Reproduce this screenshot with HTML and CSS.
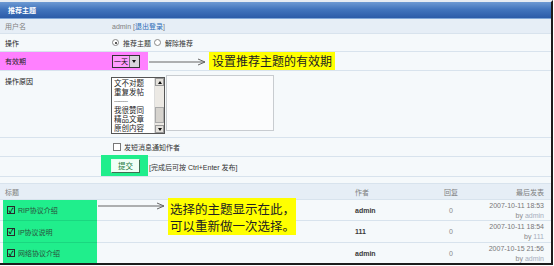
FILE: index.html
```html
<!DOCTYPE html>
<html>
<head>
<meta charset="utf-8">
<link rel="stylesheet" href="styles.css">
</head>
<body>
<div class="panel">
  <div class="head">推荐主题</div>
  <div class="row user"><span class="lbl muted">用户名</span><span class="val muted">admin [<span class="link">退出登录</span>]</span></div>
  <div class="row op"><span class="lbl">操作</span><span class="val"><span class="radio on"></span>推荐主题 <span class="radio second"></span>解除推荐</span></div>
  <div class="row exp">
    <div class="pink"><span class="lbl">有效期</span><span class="sel"><span class="seltext">一天</span><span class="selbtn"></span></span></div>
    <svg class="arrow1" width="58" height="8" viewBox="0 0 58 8"><line x1="0" y1="4" x2="56" y2="4" stroke="#666" stroke-width="1.2"/><polyline points="49,1 56,4 49,7" fill="none" stroke="#666" stroke-width="1"/></svg>
    <span class="callout1">设置推荐主题的有效期</span>
  </div>
  <div class="row reason">
    <span class="lbl top">操作原因</span>
    <div class="val top">
      <div class="listbox">
        <div class="items">
          <div class="item">文不对题</div>
          <div class="item">重复发帖</div>
          <div class="item dash">--------</div>
          <div class="item">我很赞同</div>
          <div class="item">精品文章</div>
          <div class="item">原创内容</div>
        </div>
        <div class="sbar"><span class="sbtn up"></span><span class="track"><span class="thumb"></span></span><span class="sbtn down"></span></div>
      </div>
      <div class="textarea"></div>
    </div>
  </div>
  <div class="row notify"><span class="lbl"></span><span class="val"><span class="cbox"></span>发短消息通知作者</span></div>
  <div class="row submit">
    <span class="pad"></span>
    <div class="greenbtn"><span class="btn">提交</span></div>
    <span class="hint">[完成后可按 Ctrl+Enter 发布]</span>
  </div>
  <div class="gap"></div>
  <div class="trow thead">
    <span class="c-title">标题</span><span class="c-author">作者</span><span class="c-reply">回复</span><span class="c-last">最后发表</span>
  </div>
  <div class="trow r1">
    <span class="c-title"><span class="gcell"><span class="cbox checked">✓</span>RIP协议介绍</span></span><span class="c-author b">admin</span><span class="c-reply">0</span><span class="c-last"><span class="date">2007-10-11 18:53</span><span class="by">by <span class="bylink">admin</span></span></span>
  </div>
  <div class="trow r2">
    <span class="c-title"><span class="gcell"><span class="cbox checked">✓</span>IP协议说明</span></span><span class="c-author b">111</span><span class="c-reply">0</span><span class="c-last"><span class="date">2007-10-11 18:54</span><span class="by">by <span class="bylink">111</span></span></span>
  </div>
  <div class="trow r3">
    <span class="c-title"><span class="gcell"><span class="cbox checked">✓</span>网络协议介绍</span></span><span class="c-author b">admin</span><span class="c-reply">0</span><span class="c-last"><span class="date">2007-10-15 21:56</span><span class="by">by <span class="bylink">admin</span></span></span>
  </div>
  <svg class="arrow2" width="68" height="8" viewBox="0 0 68 8"><line x1="0" y1="4" x2="66" y2="4" stroke="#666" stroke-width="1.2"/><polyline points="59,1 66,4 59,7" fill="none" stroke="#666" stroke-width="1"/></svg>
  <div class="callout2">选择的主题显示在此，<br>可以重新做一次选择。</div>
</div>
</body>
</html>
```

FILE: styles.css
```css
html, body {
  margin: 0;
  padding: 0;
  background: #ffffff;
}
body {
  font-family: "Liberation Sans", "Noto Sans CJK SC", sans-serif;
  font-size: 7px;
  color: #333;
}
.panel {
  position: relative;
  width: 551px;
  height: 261px;
  border-top: 2px solid #e6ecf2;
  border-right: 2px solid #1c1c1c;
  border-bottom: 2px solid #1c1c1c;
  background: #f5f9fb;
  overflow: hidden;
}
.head {
  height: 17px;
  box-sizing: border-box;
  padding-left: 8px;
  display: flex;
  align-items: center;
  color: #fff;
  font-weight: bold;
  background: linear-gradient(#6d9ad3, #4275bd 45%, #2c5ca8);
  border-bottom: 1px solid #7fa6d6;
}
.row {
  display: flex;
  align-items: center;
  border-bottom: 1px solid #d8e3ed;
  box-sizing: border-box;
}
.lbl {
  width: 112px;
  flex: none;
  box-sizing: border-box;
  padding-left: 5px;
  color: #222;
}
.val {
  display: flex;
  align-items: center;
  white-space: nowrap;
}
.muted { color: #808080; }
.link { color: #2b6cb8; }
.user { height: 15px; background: #e6eef6; }
.op { height: 18px; }
.exp { height: 19px; align-items: stretch; }
.reason { height: 67px; align-items: flex-start; }
.notify { height: 19px; }
.submit { height: 20px; align-items: stretch; }

.radio {
  width: 7px;
  height: 7px;
  border: 1px solid #888;
  border-radius: 50%;
  background: #fff;
  margin: 0 4px 0 0;
  box-sizing: border-box;
  position: relative;
  flex: none;
}
.radio.second { margin-left: 3px; }
.radio.on::after {
  content: "";
  position: absolute;
  left: 1.5px;
  top: 1.5px;
  width: 2px;
  height: 2px;
  border-radius: 50%;
  background: #222;
}

.pink {
  width: 148px;
  background: #ff80ff;
  display: flex;
  align-items: center;
}
.sel {
  display: flex;
  align-items: stretch;
  width: 28px;
  height: 13px;
  box-sizing: border-box;
  border: 1px solid #333;
  background: #ff9cff;
  white-space: nowrap;
  overflow: hidden;
}
.seltext {
  flex: 1;
  font-size: 7px;
  line-height: 11px;
  padding-left: 1px;
  color: #111;
  white-space: nowrap;
  overflow: hidden;
}
.selbtn {
  width: 9px;
  flex: none;
  background: #d9d4dc;
  border-left: 1px solid #777;
  position: relative;
}
.selbtn::after {
  content: "";
  position: absolute;
  left: 2px;
  top: 4px;
  border-left: 2.5px solid transparent;
  border-right: 2.5px solid transparent;
  border-top: 3px solid #111;
}
.arrow1 {
  align-self: center;
  margin-left: 1px;
  margin-top: 1px;
}
.callout1 {
  margin-left: 2px;
  background: #ffff00;
  font-family: "Noto Sans CJK SC", sans-serif;
  font-size: 12px;
  line-height: 18px;
  padding: 0 3px;
  color: #222;
  white-space: nowrap;
}

.top { align-self: flex-start; }
.reason .lbl { padding-top: 5px; }
.reason .val { padding-top: 4px; align-items: flex-start; }
.listbox {
  width: 54px;
  height: 57px;
  box-sizing: border-box;
  border: 1px solid #555;
  background: #fff;
  display: flex;
  margin-top: 2px;
  margin-left: -1px;
  overflow: hidden;
}
.items {
  flex: 1;
  padding-left: 2px;
  padding-top: 1px;
  overflow: hidden;
}
.item {
  font-size: 7.5px;
  line-height: 9px;
  height: 9px;
  color: #222;
  white-space: nowrap;
  overflow: hidden;
}
.item.dash { letter-spacing: -0.3px; color: #333; font-size: 6px; }
.sbar {
  width: 9px;
  flex: none;
  display: flex;
  flex-direction: column;
  background: #ece9e4;
  border-left: 1px solid #ddd;
}
.sbtn {
  height: 8px;
  background: #e4e1dc;
  border: 1px solid #999;
  box-sizing: border-box;
  position: relative;
}
.sbtn::after {
  content: "";
  position: absolute;
  left: 1.5px;
  top: 2px;
  border-left: 2.5px solid transparent;
  border-right: 2.5px solid transparent;
}
.sbtn.up::after { border-bottom: 3px solid #111; }
.sbtn.down::after { border-top: 3px solid #111; }
.track {
  flex: 1;
  position: relative;
}
.thumb {
  position: absolute;
  left: 0;
  right: 0;
  bottom: 2px;
  height: 16px;
  background: #d6d3ce;
  border: 1px solid #aaa;
  box-sizing: border-box;
}
.textarea {
  width: 108px;
  height: 56px;
  margin-left: 1px;
  box-sizing: border-box;
  border: 1px solid #c8ccd0;
  background: #fbfcfd;
}

.cbox {
  width: 8px;
  height: 8px;
  box-sizing: border-box;
  border: 1px solid #777;
  background: #fff;
  margin-right: 3px;
  flex: none;
  display: inline-flex;
  align-items: center;
  justify-content: center;
  font-size: 7px;
  line-height: 1;
  color: #111;
  font-weight: bold;
}
.notify .val { padding-left: 1px; }

.pad { width: 101px; flex: none; }
.greenbtn {
  width: 47px;
  flex: none;
  background: #20ee8c;
  display: flex;
  align-items: center;
  padding-left: 10px;
  box-sizing: border-box;
  margin-top: -2px;
}
.btn {
  width: 29px;
  height: 14px;
  box-sizing: border-box;
  border: 1px solid;
  border-color: #e6fff0 #3f6f52 #3f6f52 #e6fff0;
  background: #f0fff6;
  color: #1f7a3e;
  font-size: 7.5px;
  display: flex;
  align-items: center;
  justify-content: center;
}
.hint {
  align-self: center;
  margin-left: 1px;
  color: #333;
  font-size: 7px;
  white-space: nowrap;
}

.gap {
  height: 6px;
}
.trow {
  display: flex;
  align-items: stretch;
  box-sizing: border-box;
  border-bottom: 1px solid #d8e3ed;
}
.thead {
  height: 17px;
  background: #e6eef6;
  color: #808080;
  border-top: 1px solid #d8e3ed;
  align-items: center;
}
.thead .c-title { padding-left: 5px; }
.r1 { height: 21px; }
.r2 { height: 22px; }
.r3 { height: 20px; border-bottom: 0; }
.c-title {
  width: 355px;
  flex: none;
  display: flex;
  align-items: stretch;
  box-sizing: border-box;
}
.c-author {
  width: 71px;
  flex: none;
  display: flex;
  align-items: center;
}
.c-author.b { font-weight: bold; color: #3a3a3a; }
.c-reply {
  width: 50px;
  flex: none;
  display: flex;
  align-items: center;
  justify-content: center;
  color: #888;
}
.c-last {
  flex: 1;
  display: flex;
  flex-direction: column;
  align-items: flex-end;
  justify-content: center;
  padding-right: 7px;
  white-space: nowrap;
}
.thead .c-author, .thead .c-reply, .thead .c-last { color: #808080; }
.date { color: #777; line-height: 10px; }
.by { color: #888; line-height: 9px; }
.bylink { color: #a6adbd; }
.gcell {
  margin-left: 3px;
  width: 94px;
  background: #20ee8c;
  display: flex;
  align-items: center;
  padding-left: 4px;
  box-sizing: border-box;
  color: #2a4d3a;
  margin-bottom: -1px;
  border-bottom: 1px solid #1ad780;
  white-space: nowrap;
}
.r3 .gcell { margin-bottom: 0; border-bottom: 0; }
.gcell .cbox {
  border-color: #2a2a2a;
  background: #20ee8c;
  margin-right: 3px;
}

.arrow2 {
  position: absolute;
  left: 98px;
  top: 200px;
}
.callout2 {
  position: absolute;
  left: 168px;
  top: 196px;
  width: 128px;
  height: 37px;
  box-sizing: border-box;
  background: #ffff00;
  font-family: "Noto Sans CJK SC", sans-serif;
  font-size: 12.5px;
  line-height: 17px;
  padding: 2px 0 0 2px;
  color: #222;
  white-space: nowrap;
}
```
